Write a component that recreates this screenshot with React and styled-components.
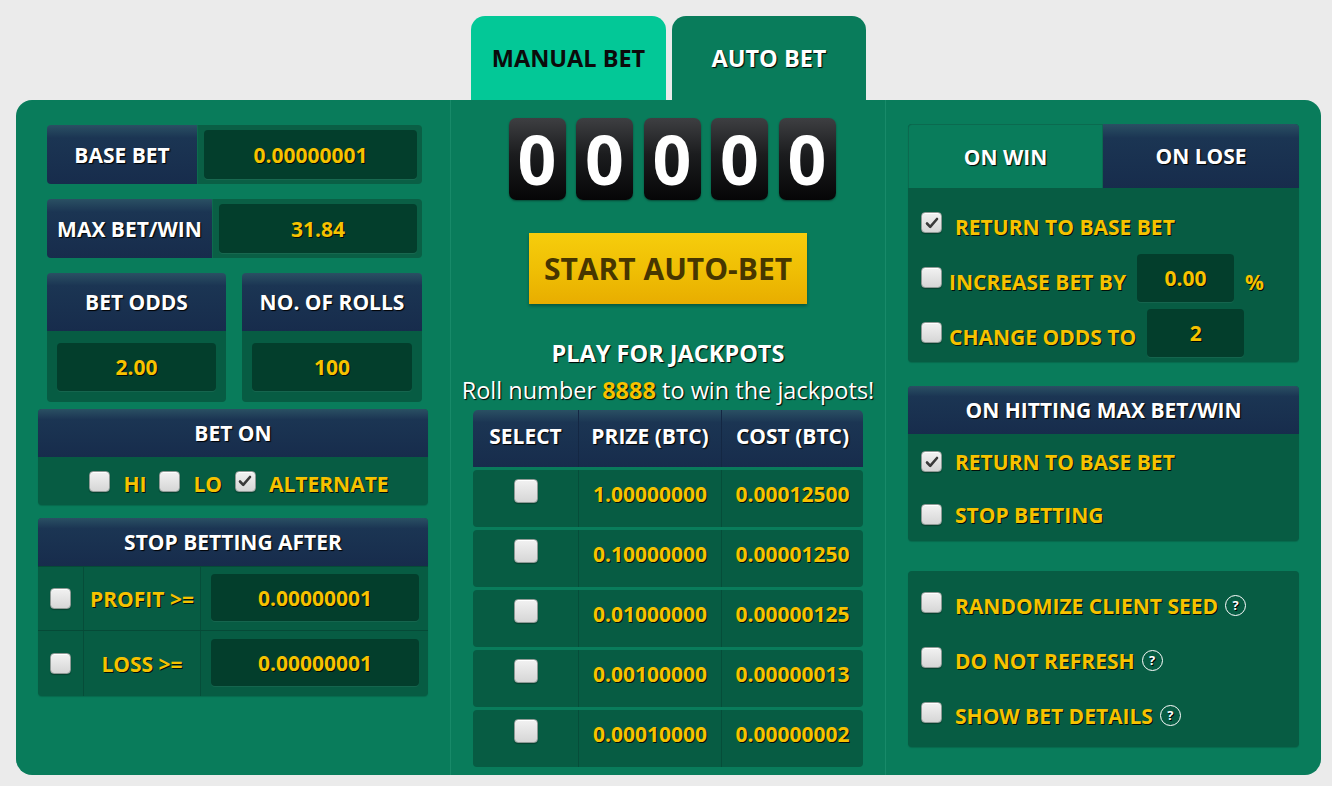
import React from 'react';
import styled, { createGlobalStyle } from 'styled-components';

const Global = createGlobalStyle`
  html, body { margin: 0; padding: 0; background: #ebebeb; }
  body { font-family: "Open Sans", "DejaVu Sans", sans-serif; }
  * { box-sizing: border-box; }
`;

const GREEN = '#097c5b';
const DARK = '#075c43';
const INPUT = '#033e2c';
const YELLOW = '#f6c200';
const NAVY = 'linear-gradient(to bottom, #2a5063 0%, #1b3553 22%, #172c4c 100%)';

const Page = styled.div`
  width: 1321px;
  padding: 16px 0 0 16px;
`;

const TabRow = styled.div`
  display: flex;
  gap: 6px;
  padding-left: 455px;
  height: 84px;
`;

const Tab = styled.div`
  width: ${p => p.$w}px;
  height: 84px;
  border-radius: 14px 14px 0 0;
  background: ${p => (p.$active ? GREEN : '#03c897')};
  color: ${p => (p.$active ? '#fff' : '#0b0b0b')};
  text-shadow: ${p => (p.$active ? '1px 1px 1px #000' : 'none')};
  font-weight: 700;
  font-size: 23.5px;
  display: flex;
  align-items: center;
  justify-content: center;
`;

const Panel = styled.div`
  display: grid;
  grid-template-columns: 434px 436px 435px;
  height: 675px;
  background: ${GREEN};
  border-radius: 16px;
`;

const LeftCol = styled.div`
  display: flex;
  flex-direction: column;
  padding: 25px 22px 0 22px;
`;

const MidCol = styled.div`
  display: flex;
  flex-direction: column;
  align-items: center;
  padding-top: 18px;
  border-left: 1px solid #188a69;
  border-right: 1px solid #188a69;
  height: 677px;
`;

const RightCol = styled.div`
  display: flex;
  flex-direction: column;
  padding: 24px 22px 0 22px;
`;

const WhiteText = styled.span`
  color: #fff;
  font-weight: 700;
  font-size: 21px;
  text-shadow: 1px 1px 1px #000;
  white-space: nowrap;
`;

const Yellow = styled.span`
  color: ${YELLOW};
  font-weight: 700;
  font-size: ${p => p.$size || 21}px;
  text-shadow: 1px 1px 0 rgba(0, 0, 0, 0.85);
  white-space: nowrap;
  padding-top: ${p => p.$shift || 0}px;
`;

const Percent = styled(Yellow)`
  margin-left: 4px;
`;

const InfoRow = styled.div`
  display: flex;
  height: 59px;
  margin: ${p => p.$top || 0}px 6px 0 9px;
`;

const InfoLabel = styled.div`
  width: ${p => p.$w}px;
  background: ${NAVY};
  border-radius: 4px 0 0 4px;
  display: flex;
  align-items: center;
  justify-content: center;
`;

const InfoValue = styled.div`
  flex: 1;
  background: #0a5f45;
  border-left: 1px solid #0d6b4e;
  border-radius: 0 4px 4px 0;
  padding: 5px 5px 5px 6px;
  display: flex;
`;

const ValueBox = styled.div`
  flex: ${p => (p.$w ? 'none' : 1)};
  width: ${p => (p.$w ? `${p.$w}px` : 'auto')};
  height: ${p => (p.$h ? `${p.$h}px` : 'auto')};
  margin-left: ${p => p.$ml || 0}px;
  background: ${INPUT};
  border-radius: 4px;
  box-shadow: 0 1px 0 rgba(255, 255, 255, 0.06);
  display: flex;
  align-items: center;
  justify-content: center;
`;

const CardGrid = styled.div`
  display: grid;
  grid-template-columns: 179px 180px;
  gap: 16px;
  margin: 15px 6px 0 9px;
`;

const Card = styled.div`
  display: flex;
  flex-direction: column;
  border-radius: 4px;
  overflow: hidden;
`;

const CardHead = styled.div`
  height: 58px;
  background: ${NAVY};
  display: flex;
  align-items: center;
  justify-content: center;
`;

const CardBody = styled.div`
  height: 71px;
  background: ${DARK};
  padding: 12px 10px 11px;
  display: flex;
`;

const Section = styled.div`
  margin-top: ${p => p.$top || 0}px;
  border-radius: 4px;
  overflow: hidden;
  background: ${DARK};
  box-shadow: 0 1px 1px rgba(0, 0, 0, 0.15);
`;

const SectionHead = styled.div`
  height: 48px;
  background: ${NAVY};
  display: flex;
  align-items: center;
  justify-content: center;
`;

const BetOnBody = styled.div`
  height: 48px;
  display: flex;
  align-items: center;
  justify-content: center;
  gap: 13px;
  padding-left: 12px;
`;

const StopRow = styled.div`
  display: grid;
  grid-template-columns: 45px 117px 1fr;
  height: ${p => p.$h}px;
  border-top: 1px solid #064a37;
`;

const Cell = styled.div`
  display: flex;
  align-items: ${p => (p.$stretch ? 'stretch' : 'center')};
  justify-content: center;
  border-left: ${p => (p.$first ? 'none' : '1px solid #064d39')};
  padding: ${p => p.$pad || 0};
`;

const Box = styled.span`
  width: ${p => p.$size || 21}px;
  height: ${p => p.$size || 21}px;
  flex: none;
  border-radius: 4px;
  background: linear-gradient(to bottom, #f2f2f2, #d6d6d6);
  border: 1px solid #8f9a96;
  box-shadow: inset 0 1px 0 #fff, 0 1px 1px rgba(0, 0, 0, 0.3);
  display: inline-flex;
  align-items: center;
  justify-content: center;
  margin-bottom: ${p => p.$lift || 0}px;
`;

const Check = ({ checked, size, lift }) => (
  <Box $size={size} $lift={lift}>
    {checked && (
      <svg width="14" height="14" viewBox="0 0 14 14">
        <path d="M2 7.5 L5.2 10.8 L12 3" fill="none" stroke="#3a3a3a" strokeWidth="2.6" strokeLinecap="round" strokeLinejoin="round" />
      </svg>
    )}
  </Box>
);

const Digits = styled.div`
  display: flex;
  gap: 10.5px;
  margin-left: 8px;
`;

const Digit = styled.div`
  width: 57px;
  height: 82px;
  border-radius: 7px;
  background: linear-gradient(to bottom, #3e3f42 0%, #1b1c1e 45%, #060607 100%);
  box-shadow: 0 1px 2px rgba(0, 0, 0, 0.4);
  color: #fff;
  font-weight: 700;
  font-size: 68px;
  line-height: 82px;
  text-align: center;
`;

const StartButton = styled.button`
  margin-top: 33px;
  width: 278px;
  height: 71px;
  border: none;
  background: linear-gradient(to bottom, #f6cd0c 0%, #efbe04 55%, #e8ad00 100%);
  box-shadow: 0 2px 3px rgba(0, 0, 0, 0.3);
  color: #473600;
  font-family: inherit;
  font-weight: 700;
  font-size: 30px;
  padding: 0;
  cursor: pointer;
`;

const JackTitle = styled.div`
  margin-top: 34px;
  color: #fff;
  font-weight: 700;
  font-size: 23.5px;
  line-height: 30px;
  text-shadow: 1px 1px 1px #000;
`;

const JackText = styled.div`
  margin-top: 7px;
  color: #fff;
  font-size: 23.5px;
  line-height: 30px;
  text-shadow: 1px 1px 1px #000;
  white-space: nowrap;
  b { color: ${YELLOW}; }
`;

const Table = styled.div`
  margin-top: 5px;
  width: 390px;
  display: flex;
  flex-direction: column;
  gap: 3px;
`;

const TRow = styled.div`
  display: grid;
  grid-template-columns: 105px 143px 142px;
  height: 57px;
  border-radius: ${p => (p.$head ? '5px 5px 0 0' : '4px')};
  background: ${p => (p.$head ? NAVY : DARK)};
  overflow: hidden;
`;

const TCell = styled.div`
  display: flex;
  align-items: center;
  justify-content: center;
  border-left: ${p => (p.$first ? 'none' : `1px solid ${p.$head ? '#142743' : '#064d39'}`)};
  padding-bottom: ${p => p.$pb || 0}px;
`;

const OptBox = styled.div`
  margin-top: ${p => p.$top || 0}px;
  border-radius: 4px;
  overflow: hidden;
  background: ${DARK};
  box-shadow: 0 1px 1px rgba(0, 0, 0, 0.15);
`;

const SubTabs = styled.div`
  display: grid;
  grid-template-columns: 195px 196px;
  height: 64px;
`;

const SubTab = styled.div`
  display: flex;
  align-items: center;
  justify-content: center;
  background: ${p => (p.$active ? GREEN : NAVY)};
  border: ${p => (p.$active ? '1px solid #0b6a4f' : 'none')};
  border-bottom: none;
  border-radius: ${p => (p.$active ? '4px 0 0 0' : '0 4px 0 0')};
`;

const BoxBody = styled.div`
  height: ${p => p.$h}px;
  padding-top: ${p => p.$pt || 0}px;
  padding-left: 13px;
  display: flex;
  flex-direction: column;
`;

const CheckRow = styled.div`
  height: ${p => p.$h || 55}px;
  display: flex;
  align-items: center;
  gap: ${p => p.$gap || 13}px;
`;

const Help = styled.span`
  width: 21px;
  height: 21px;
  border: 1px solid #fff;
  border-radius: 50%;
  display: inline-flex;
  align-items: center;
  justify-content: center;
  color: #fff;
  font-size: 13px;
  font-weight: 700;
  margin-left: 7px;
  margin-top: 5px;
  text-shadow: 1px 1px 0 #000;
  flex: none;
`;

const HelpLabel = styled.span`
  display: inline-flex;
  align-items: center;
`;

const jackpots = [
  ['1.00000000', '0.00012500'],
  ['0.10000000', '0.00001250'],
  ['0.01000000', '0.00000125'],
  ['0.00100000', '0.00000013'],
  ['0.00010000', '0.00000002'],
];

export default function App() {
  return (
    <Page>
      <Global />
      <TabRow>
        <Tab $w={195}>MANUAL BET</Tab>
        <Tab $w={194} $active>AUTO BET</Tab>
      </TabRow>
      <Panel>
        <LeftCol>
          <InfoRow>
            <InfoLabel $w={150}><WhiteText>BASE BET</WhiteText></InfoLabel>
            <InfoValue><ValueBox><Yellow>0.00000001</Yellow></ValueBox></InfoValue>
          </InfoRow>
          <InfoRow $top={15}>
            <InfoLabel $w={165}><WhiteText>MAX BET/WIN</WhiteText></InfoLabel>
            <InfoValue><ValueBox><Yellow>31.84</Yellow></ValueBox></InfoValue>
          </InfoRow>
          <CardGrid>
            <Card>
              <CardHead><WhiteText>BET ODDS</WhiteText></CardHead>
              <CardBody><ValueBox><Yellow>2.00</Yellow></ValueBox></CardBody>
            </Card>
            <Card>
              <CardHead><WhiteText>NO. OF ROLLS</WhiteText></CardHead>
              <CardBody><ValueBox><Yellow>100</Yellow></ValueBox></CardBody>
            </Card>
          </CardGrid>
          <Section $top={7}>
            <SectionHead><WhiteText>BET ON</WhiteText></SectionHead>
            <BetOnBody>
              <Check />
              <Yellow $shift={6}>HI</Yellow>
              <Check />
              <Yellow $shift={6}>LO</Yellow>
              <Check checked />
              <Yellow $shift={6}>ALTERNATE</Yellow>
            </BetOnBody>
          </Section>
          <Section $top={13}>
            <SectionHead><WhiteText>STOP BETTING AFTER</WhiteText></SectionHead>
            <StopRow $h={64}>
              <Cell $first><Check /></Cell>
              <Cell><Yellow>PROFIT &gt;=</Yellow></Cell>
              <Cell $stretch $pad="7px 9px 9px 10px"><ValueBox><Yellow>0.00000001</Yellow></ValueBox></Cell>
            </StopRow>
            <StopRow $h={66}>
              <Cell $first><Check /></Cell>
              <Cell><Yellow>LOSS &gt;=</Yellow></Cell>
              <Cell $stretch $pad="8px 9px 10px 10px"><ValueBox><Yellow>0.00000001</Yellow></ValueBox></Cell>
            </StopRow>
          </Section>
        </LeftCol>

        <MidCol>
          <Digits>
            {[0, 1, 2, 3, 4].map(i => <Digit key={i}>0</Digit>)}
          </Digits>
          <StartButton>START AUTO-BET</StartButton>
          <JackTitle>PLAY FOR JACKPOTS</JackTitle>
          <JackText>Roll number <b>8888</b> to win the jackpots!</JackText>
          <Table>
            <TRow $head>
              <TCell $first $head $pb={6}><WhiteText>SELECT</WhiteText></TCell>
              <TCell $head $pb={6}><WhiteText>PRIZE (BTC)</WhiteText></TCell>
              <TCell $head $pb={6}><WhiteText>COST (BTC)</WhiteText></TCell>
            </TRow>
            {jackpots.map(([prize, cost]) => (
              <TRow key={prize}>
                <TCell $first><Check size={24} lift={15} /></TCell>
                <TCell $pb={9}><Yellow>{prize}</Yellow></TCell>
                <TCell $pb={9}><Yellow>{cost}</Yellow></TCell>
              </TRow>
            ))}
          </Table>
        </MidCol>

        <RightCol>
          <OptBox>
            <SubTabs>
              <SubTab $active><WhiteText>ON WIN</WhiteText></SubTab>
              <SubTab><WhiteText>ON LOSE</WhiteText></SubTab>
            </SubTabs>
            <BoxBody $h={174} $pt={7}>
              <CheckRow>
                <Check checked />
                <Yellow $shift={8}>RETURN TO BASE BET</Yellow>
              </CheckRow>
              <CheckRow $gap={7}>
                <Check />
                <Yellow $shift={8}>INCREASE BET BY</Yellow>
                <ValueBox $w={97} $h={48} $ml={4}><Yellow>0.00</Yellow></ValueBox>
                <Percent $shift={8}>%</Percent>
              </CheckRow>
              <CheckRow $gap={7}>
                <Check />
                <Yellow $shift={8}>CHANGE ODDS TO</Yellow>
                <ValueBox $w={97} $h={48} $ml={4}><Yellow>2</Yellow></ValueBox>
              </CheckRow>
            </BoxBody>
          </OptBox>

          <OptBox $top={24}>
            <SectionHead><WhiteText>ON HITTING MAX BET/WIN</WhiteText></SectionHead>
            <BoxBody $h={107} $pt={1}>
              <CheckRow $h={54}>
                <Check checked />
                <Yellow>RETURN TO BASE BET</Yellow>
              </CheckRow>
              <CheckRow $h={54}>
                <Check />
                <Yellow>STOP BETTING</Yellow>
              </CheckRow>
            </BoxBody>
          </OptBox>

          <OptBox $top={30}>
            <BoxBody $h={176} $pt={4}>
              {['RANDOMIZE CLIENT SEED', 'DO NOT REFRESH', 'SHOW BET DETAILS'].map(t => (
                <CheckRow key={t}>
                  <Check />
                  <HelpLabel>
                    <Yellow $shift={6}>{t}</Yellow>
                    <Help>?</Help>
                  </HelpLabel>
                </CheckRow>
              ))}
            </BoxBody>
          </OptBox>
        </RightCol>
      </Panel>
    </Page>
  );
}
